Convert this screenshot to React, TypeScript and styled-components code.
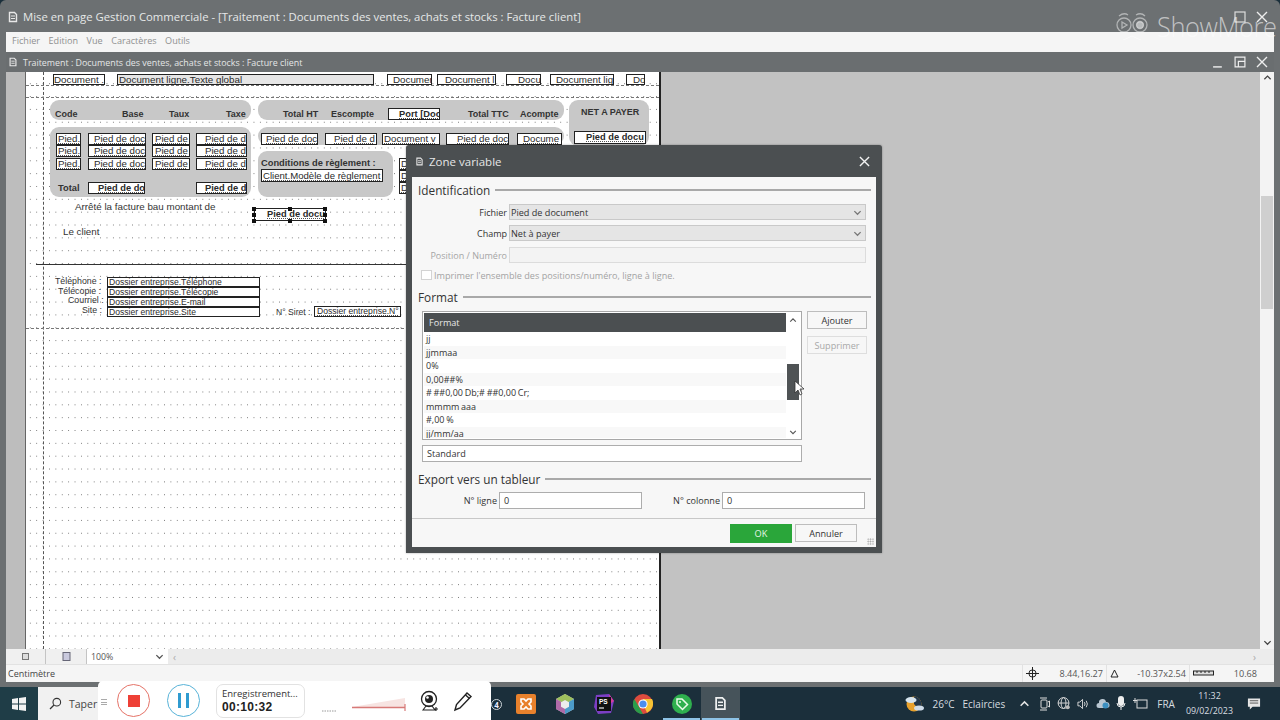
import React from "react";
import styled, { createGlobalStyle } from "styled-components";

const Global = createGlobalStyle`
  html, body { margin: 0; padding: 0; width: 1280px; height: 720px; overflow: hidden; background: #1b2f3b; }
  #root { width: 1280px; height: 720px; }
  * { box-sizing: border-box; }
`;

const Screen = styled.div`
  position: relative; width: 1280px; height: 720px; display: flex; flex-direction: column;
  font-family: "Open Sans", "Noto Sans", sans-serif; overflow: hidden;
`;
const Win = styled.div`
  height: 687px; background: #6c7072; padding: 0 6px 5px 6px; display: flex; flex-direction: column;
  border-radius: 6px 6px 0 0;
`;
const TitleBar = styled.div`
  height: 32px; display: flex; align-items: center; gap: 4px; color: #e6e8e8; font-size: 11.3px; padding: 1px 0 0 1px; flex: none;
`;
const TitleText = styled.span` flex: 1; white-space: nowrap; `;
const WinBtns = styled.div` display: flex; align-items: center; gap: 10px; margin-right: 6px; `;
const MenuBar = styled.div`
  height: 20px; background: #f5f5f5; display: flex; align-items: center; gap: 8.5px; padding: 0 0 3px 6px; flex: none;
  font-size: 9.1px; color: #8f9090;
`;
const ChildBar = styled.div`
  height: 20px; background: #6a6e70; display: flex; align-items: center; gap: 5px; padding-left: 2px; color: #e4e6e6; font-size: 8.9px; flex: none;
`;
const ChildText = styled.span` flex: 1; `;
const Work = styled.div` flex: 1; display: flex; min-height: 0; background: #c2c2c2; `;
const Gutter = styled.div` width: 19px; background: #bdbdbd; flex: none; `;
const Page = styled.div`
  position: relative; width: 636px; flex: none; background-color: #fff; overflow: hidden;
  border-left: 1px solid #666; border-right: 2px solid #222;
  background-image: radial-gradient(circle at center, #777 0.55px, transparent 0.85px);
  background-size: 6.4px 12.85px; background-position: 1.1px 5.3px;
`;
const Rest = styled.div` flex: 1; background: #c2c2c2; `;
const VScroll = styled.div`
  width: 14px; flex: none; background: #f3f3f3; display: flex; flex-direction: column; align-items: center; justify-content: space-between; padding: 1px 0 2px; position: relative;
`;
const VThumb = styled.div` position: absolute; left: 1px; top: 124px; width: 12px; height: 113px; background: #cfcfcf; `;
const TabRow = styled.div`
  height: 15px; background: #f2f2f2; display: flex; align-items: center; flex: none;
`;
const SheetTab = styled.div<{ $w: number }>`
  width: ${p => p.$w}px; height: 15px; background: #f0f0f0; border-right: 1px solid #c4c4c4; display: flex; align-items: center; justify-content: center; flex: none;
`;
const ZoomBox = styled.div`
  width: 81px; height: 15px; background: #fff; font-size: 8.8px; color: #555; padding: 0 4px 0 4px; display: flex; align-items: center; justify-content: space-between; flex: none;
`;
const HScroll = styled.div`
  flex: 1; height: 15px; background: #ececec; display: flex; align-items: center; justify-content: space-between; padding: 0 18px 0 5px; color: #aaa; font-size: 10px;
`;
const Status = styled.div`
  height: 18px; background: #f5f5f5; border-top: 1px solid #e2e2e2; display: flex; align-items: center; font-size: 9px; color: #444; padding-left: 2px; flex: none;
`;
const StatusLabel = styled.span` flex: 1; `;
const StatusCell = styled.div<{ $w: number }>`
  width: ${p => p.$w}px; height: 17px; border-left: 1px solid #e2e2e2; display: flex; align-items: center; justify-content: space-between; padding: 0 3px; font-size: 9.1px; color: #555; flex: none;
`;
const StatusValue = styled.span<{ $mr?: number }>` margin-right: ${p => p.$mr ?? 0}px; `;

/* free canvas: report designer */
const Field = styled.div<{ $x: number; $y: number; $w: number; $h?: number; $b?: boolean; $s?: number; $pad?: number; $bg?: string }>`
  position: absolute; left: ${p => p.$x}px; top: ${p => p.$y}px; width: ${p => p.$w}px; height: ${p => p.$h ?? 12}px;
  border: 1px solid #222; background: ${p => p.$bg ?? "#fff"}; font-family: "Liberation Sans", Arial, sans-serif;
  font-size: ${p => p.$s ?? (p.$b ? 9.3 : 9.7)}px; font-weight: ${p => (p.$b ? 700 : 400)}; color: #2a2a2a; line-height: ${p => (p.$h ?? 12) - 2}px;
  padding-left: ${p => p.$pad ?? 1}px; white-space: nowrap; overflow: hidden; text-decoration: underline dotted #555;
`;
const Label = styled.div<{ $x: number; $y: number; $b?: boolean; $s?: number }>`
  position: absolute; left: ${p => p.$x}px; top: ${p => p.$y}px; font-family: "Liberation Sans", Arial, sans-serif;
  font-size: ${p => p.$s ?? 9}px; font-weight: ${p => (p.$b ? 700 : 400)}; color: #333; white-space: nowrap; line-height: 12px;
`;
const Band = styled.div<{ $x: number; $y: number; $w: number; $h: number; $r?: number }>`
  position: absolute; left: ${p => p.$x}px; top: ${p => p.$y}px; width: ${p => p.$w}px; height: ${p => p.$h}px;
  background: #c8c8c8; border-radius: ${p => p.$r ?? 9}px;
`;
const HDots = styled.div<{ $y: number }>`
  position: absolute; left: 0; right: 0; top: ${p => p.$y}px; border-top: 1px dashed #777;
`;
const HLine = styled.div<{ $x: number; $y: number }>`
  position: absolute; left: ${p => p.$x}px; right: 0; top: ${p => p.$y}px; border-top: 1px solid #333;
`;
const VDots = styled.div`
  position: absolute; left: 17px; top: 0; bottom: 0; border-left: 1px dashed #555;
`;
const Handle = styled.div<{ $x: number; $y: number }>`
  position: absolute; left: ${p => p.$x}px; top: ${p => p.$y}px; width: 4px; height: 4px; background: #111;
`;

/* dialog */
const Dialog = styled.div`
  position: absolute; left: 406px; top: 145px; width: 476px; height: 408px; background: #4b4f51; border-radius: 3px 3px 0 0;
  padding: 0 6px 6px; display: flex; flex-direction: column; box-shadow: 0 0 2px rgba(0,0,0,.4);
`;
const DlgTitle = styled.div`
  height: 32px; display: flex; align-items: center; gap: 5px; color: #e5e6e6; font-size: 11.5px; padding: 0 6px 0 3px; flex: none;
`;
const DlgBody = styled.div`
  flex: 1; background: #f7f7f7; display: flex; flex-direction: column; min-height: 0; position: relative;
`;
const DlgMain = styled.div` flex: 1; padding: 4px 5px 0 6px; `;
const GroupHead = styled.div<{ $mt?: number }>`
  display: flex; align-items: center; gap: 5px; font-size: 11.8px; color: #333; height: 18px; margin-top: ${p => p.$mt ?? 0}px;
  &::after { content: ""; flex: 1; height: 2px; background: #a9a9a9; }
`;
const FormRow = styled.div<{ $mt?: number }>`
  display: flex; align-items: center; height: 16px; gap: 2px; margin-top: ${p => p.$mt ?? 0}px;
`;
const RowLabel = styled.span<{ $off?: boolean }>`
  width: 89px; text-align: right; font-size: 9px; color: ${p => (p.$off ? "#a5a5a5" : "#333")}; flex: none; white-space: nowrap;
`;
const Combo = styled.div`
  width: 357px; height: 16px; background: #e5e5e5; border: 1px solid #c9c9c9; font-size: 9.1px; color: #333; display: flex; align-items: center; justify-content: space-between; padding: 0 3px 0 1px; flex: none;
`;
const DisabledInput = styled.div` width: 357px; height: 16px; background: #f3f3f3; border: 1px solid #dcdcdc; flex: none; `;
const CheckRow = styled.div`
  display: flex; align-items: center; gap: 2px; height: 14px; margin: 5px 0 0 3px; color: #a3a3a3; font-size: 9.1px; white-space: nowrap;
`;
const CheckBox = styled.div` width: 11px; height: 10px; background: #fff; border: 1px solid #d3d3d3; flex: none; `;
const FormatArea = styled.div` display: flex; gap: 5px; margin: 5px 0 0 4px; `;
const FormatCol = styled.div` width: 380px; display: flex; flex-direction: column; gap: 5px; flex: none; `;
const ListBox = styled.div`
  height: 129px; border: 1px solid #a8a8a8; background: #fff; display: flex; position: relative; padding: 1px;
`;
const ListMain = styled.div` flex: 1; display: flex; flex-direction: column; overflow: hidden; `;
const ListHead = styled.div`
  height: 19px; background: #4b4f51; color: #e8e8e8; font-size: 9.1px; display: flex; align-items: center; padding-left: 5px; flex: none;
`;
const ListItem = styled.div<{ $alt?: boolean }>`
  height: 13.5px; flex: none; font-size: 9px; color: #333; padding-left: 2px; display: flex; align-items: center; background: ${p => (p.$alt ? "#f8f8f8" : "#fff")}; white-space: nowrap; word-spacing: -0.6px;
`;
const ListScroll = styled.div`
  width: 14px; flex: none; position: relative; display: flex; flex-direction: column; justify-content: space-between; align-items: center; padding: 3px 0 2px;
`;
const ListThumb = styled.div` position: absolute; left: 1px; top: 51px; width: 12px; height: 36px; background: #4f5355; `;
const TextInput = styled.div<{ $w?: number }>`
  height: 17px; background: #fff; border: 1px solid #adadad; font-size: 9.1px; color: #333; display: flex; align-items: center; padding-left: 4px;
  ${p => (p.$w ? `width: ${p.$w}px; flex: none;` : "")}
`;
const SideBtns = styled.div` display: flex; flex-direction: column; gap: 7px; `;
const Btn = styled.div<{ $off?: boolean; $w?: number }>`
  width: ${p => p.$w ?? 60}px; height: 18px; background: #f7f7f7; border: 1px solid ${p => (p.$off ? "#dedede" : "#bdbdbd")};
  font-size: 9.1px; color: ${p => (p.$off ? "#a8a8a8" : "#333")}; display: flex; align-items: center; justify-content: center; flex: none;
`;
const ExportRow = styled.div` display: flex; align-items: center; margin: 4px 0 0 0; height: 17px; `;
const ExportLabel = styled.span<{ $w: number }>`
  width: ${p => p.$w}px; text-align: right; font-size: 9.1px; color: #333; flex: none; margin-right: 2px; white-space: nowrap;
`;
const DlgFoot = styled.div`
  height: 29px; flex: none; border-top: 1px solid #c8c8c8; display: flex; align-items: center; justify-content: flex-end; gap: 3px; padding-right: 19px; background: #f7f7f7; position: relative;
`;
const OkBtn = styled.div`
  width: 62px; height: 19px; background: #2aa63a; color: #e6f5e8; font-size: 9.2px; display: flex; align-items: center; justify-content: center;
`;
const Grip = styled.div`
  position: absolute; right: 2px; bottom: 2px; width: 7px; height: 7px;
  background-image: radial-gradient(circle, #a5a5a5 0.7px, transparent 0.9px); background-size: 2.4px 2.4px;
`;

/* taskbar + recorder */
const Taskbar = styled.div`
  flex: 1; background: #1b2f3b; display: flex; align-items: center; color: #dfe4e6; position: relative;
`;
const StartBtn = styled.div` width: 38px; height: 33px; background: #1f3d47; display: flex; align-items: center; justify-content: center; flex: none; `;
const SearchBox = styled.div`
  width: 130px; height: 33px; background: #f1f1f1; display: flex; align-items: center; gap: 7px; padding-left: 11px; font-size: 10.5px; color: #444; flex: none;
`;
const Badge = styled.div`
  position: absolute; left: 491px; top: 12px; width: 11px; height: 11px; border-radius: 50%; border: 1px solid #cfd6da; background: #1b2f3b;
  color: #eef; font-size: 8px; font-weight: 700; line-height: 9px; text-align: center;
`;
const TaskIcons = styled.div` position: absolute; left: 506px; top: 0; height: 33px; display: flex; align-items: center; `;
const TaskIcon = styled.div<{ $active?: boolean; $under?: boolean }>`
  width: 39px; height: 33px; display: flex; align-items: center; justify-content: center; position: relative;
  background: ${p => (p.$active ? "#46535a" : "transparent")};
  &::after { content: ""; display: ${p => (p.$under ? "block" : "none")}; position: absolute; left: 1px; right: 1px; bottom: 0; height: 2px; background: #8ec3e6; }
`;
const Tray = styled.div`
  margin-left: auto; display: flex; align-items: center; height: 33px; font-size: 10px; color: #d8dde0; padding-right: 19px;
`;
const TrayText = styled.span<{ $ml?: number }>` margin-left: ${p => p.$ml ?? 0}px; white-space: nowrap; display: flex; align-items: center; `;
const Clock = styled.div`
  margin-left: 11px; display: flex; flex-direction: column; align-items: center; font-size: 8.9px; line-height: 14.5px;
`;
const Recorder = styled.div`
  position: absolute; left: 98px; top: 681px; width: 393px; height: 39px; background: #fff; border-radius: 5px 5px 0 0; display: flex; align-items: center; padding-left: 19px;
`;
const Grab = styled.div`
  position: absolute; left: 3px; top: 18px; width: 6px; height: 6px; border-top: 1px solid #aaa; border-bottom: 1px solid #aaa;
  &::after { content: ""; display: block; margin-top: 2px; border-top: 1px solid #aaa; }
`;
const RoundBtn = styled.div<{ $c: string; $ml?: number }>`
  width: 33px; height: 33px; border-radius: 50%; border: 1px solid ${p => p.$c}; display: flex; align-items: center; justify-content: center; flex: none; margin-left: ${p => p.$ml ?? 0}px;
`;
const StopSq = styled.div` width: 12px; height: 12px; background: #ee4036; `;
const PauseBars = styled.div`
  display: flex; gap: 5px;
  &::before, &::after { content: ""; width: 3px; height: 15px; background: #2f9bd0; }
`;
const TimerBox = styled.div`
  width: 89px; height: 34px; margin-left: 16px; border: 1px solid #e2e2e2; border-radius: 7px; padding: 3px 0 0 5px; display: flex; flex-direction: column; flex: none;
`;
const TimerTop = styled.span` font-size: 9.5px; color: #333; line-height: 12px; white-space: nowrap; `;
const TimerVal = styled.span` font-family: "Liberation Sans", Arial, sans-serif; font-size: 12px; font-weight: 700; color: #222; line-height: 15px; letter-spacing: .3px; `;
const Meter = styled.svg` margin-left: 16px; flex: none; `;
const WebcamIcon = styled.svg` margin-left: 2px; flex: none; `;
const PencilIcon = styled.svg` margin-left: 12px; flex: none; `;
const Cursor = styled.svg` position: absolute; left: 794px; top: 380px; `;
const Watermark = styled.div`
  position: absolute; left: 1115px; top: 10px; display: flex; align-items: center; gap: 8px; pointer-events: none; opacity: .95;
`;
const WmText = styled.span`
  font-family: "Open Sans", sans-serif; font-size: 27px; font-weight: 300; color: rgba(255,255,255,.62); letter-spacing: -0.4px; line-height: 34px; transform: scaleX(.94); transform-origin: left;
`;

const Chev = ({ c = "#666", up = false, s = 9 }: { c?: string; up?: boolean; s?: number }) => (
  <svg width={s} height={s} viewBox="0 0 10 10"><path d={up ? "M1.5 7 5 3.5 8.5 7" : "M1.5 3.5 5 7l3.5-3.5"} fill="none" stroke={c} strokeWidth="1.4" /></svg>
);
const DocIcon = ({ s = 11, c = "#e8e8e8" }: { s?: number; c?: string }) => (
  <svg width={s} height={s} viewBox="0 0 12 12"><path d="M2.5 1.5h5l2 2v7h-7z" fill="none" stroke={c} strokeWidth="1.4" /><path d="M4 5h4M4 7.500h4" stroke={c} strokeWidth="1.100" /></svg>
);
const Cross = ({ s = 11, c = "#eee", w = 1.4 }: { s?: number; c?: string; w?: number }) => (
  <svg width={s} height={s} viewBox="0 0 12 12"><path d="M1 1l10 10M11 1 1 11" stroke={c} strokeWidth={w} /></svg>
);

const fields: [number, number, number, string, boolean?, number?][] = [
  [30, 61, 25, "Pied.", false, 1], [62, 61, 58, " Pied de doc", false, 5], [126, 61, 38, "Pied de", false, 2], [170, 61, 51, " Pied de d", false, 8],
  [30, 73, 25, "Pied.", false, 1], [62, 73, 58, " Pied de doc", false, 5], [126, 73, 38, "Pied de", false, 2], [170, 73, 51, " Pied de d", false, 8],
  [30, 86, 25, "Pied.", false, 1], [62, 86, 58, " Pied de doc", false, 5], [126, 86, 38, "Pied de", false, 2], [170, 86, 51, " Pied de d", false, 8],
  [62, 110, 57, " Pied de do", true, 9], [170, 110, 51, " Pied de d", true, 8],
  [235, 61, 57, " Pied de doc", false, 4], [299, 61, 52, " Pied de d", false, 8], [356, 61, 58, "Document v", false, 1], [420, 61, 63, " Pied de doc", false, 10], [491, 61, 45, " Docume", false, 5],
  [373, 86, 8, "D"], [373, 98, 8, "D"], [373, 110, 8, "D"],
];

const lines = ["jj", "jjmmaa", "0%", "0,00##%", "# ##0,00 Db;# ##0,00 Cr;", "mmmm aaa", "#,00 %", "jj/mm/aa"];
const contacts = [["Téléphone :", 29], ["Télécopie :", 32], ["Courriel :", 42], ["Site :", 56]] as const;
const contactFields = ["Dossier entreprise.Téléphone", "Dossier entreprise.Télécopie", "Dossier entreprise.E-mail", "Dossier entreprise.Site"];

export default function App() {
  return (
    <Screen>
      <Global />
      <Win>
        <TitleBar>
          <DocIcon s={12} />
          <TitleText>Mise en page Gestion Commerciale - [Traitement : Documents des ventes, achats et stocks : Facture client]</TitleText>
          <WinBtns>
            <svg width="12" height="12" viewBox="0 0 12 12"><rect x="1" y="1" width="10" height="10" fill="none" stroke="#ddd" strokeWidth="1.2" /></svg>
            <Cross s={12} />
          </WinBtns>
        </TitleBar>
        <MenuBar>
          <span>Fichier</span><span>Edition</span><span>Vue</span><span>Caractères</span><span>Outils</span>
        </MenuBar>
        <ChildBar>
          <DocIcon s={10} />
          <ChildText>Traitement : Documents des ventes, achats et stocks : Facture client</ChildText>
          <WinBtns>
            <svg width="12" height="12" viewBox="0 0 11 11"><path d="M1 10h8" stroke="#eee" strokeWidth="1.3" /></svg>
            <svg width="12" height="12" viewBox="0 0 11 11"><path d="M1 1h9v9H1zM4 10V5h6" fill="none" stroke="#eee" strokeWidth="1.1" /></svg>
            <Cross s={12} />
          </WinBtns>
        </ChildBar>
        <Work>
          <Gutter />
          <Page>
            <VDots />
            <HDots $y={13} />
            <HDots $y={25} />
            <Field $x={27} $y={2} $w={52} $h={11} $s={9.8} $pad={0}>Document .</Field>
            <Field $x={91} $y={2} $w={257} $h={11} $s={9.8} $pad={1} $bg="#e6e6e6">Document ligne.Texte global</Field>
            <Field $x={361} $y={2} $w={45} $h={11} $s={9.8} $pad={5}>Document</Field>
            <Field $x={411} $y={2} $w={59} $h={11} $s={9.8} $pad={7}>Document l</Field>
            <Field $x={480} $y={2} $w={35} $h={11} $s={9.8} $pad={11}>Docu</Field>
            <Field $x={524} $y={2} $w={64} $h={11} $s={9.8} $pad={5}>Document lig</Field>
            <Field $x={600} $y={2} $w={19} $h={11} $s={9.8} $pad={6}>Do</Field>

            <Band $x={24} $y={28} $w={201} $h={20} />
            <Band $x={232} $y={28} $w={306} $h={20} />
            <Band $x={24} $y={55} $w={201} $h={70} />
            <Band $x={232} $y={55} $w={306} $h={18} />
            <Band $x={232} $y={79} $w={135} $h={46} />
            <Band $x={543} $y={28} $w={80} $h={46} />

            <Label $b $x={29} $y={36}>Code</Label>
            <Label $b $x={96} $y={36}>Base</Label>
            <Label $b $x={143} $y={36}>Taux</Label>
            <Label $b $x={200} $y={36}>Taxe</Label>
            <Label $b $x={257} $y={36}>Total HT</Label>
            <Label $b $x={305} $y={36}>Escompte</Label>
            <Field $b $x={362} $y={36} $w={52} $pad={10}>Port [Doc</Field>
            <Label $b $x={442} $y={36}>Total TTC</Label>
            <Label $b $x={494} $y={36}>Acompte</Label>
            <Label $b $x={555} $y={34} $s={9}>NET A PAYER</Label>
            <Field $b $x={548} $y={59} $w={72} $h={13} $pad={11}>Pied de docu</Field>
            {fields.map(([x, y, w, t, b, pad], i) => (
              <Field key={i} $x={x} $y={y} $w={w} $b={b} $pad={pad}>{t}</Field>
            ))}
            <Label $b $x={32} $y={110} $s={9.3}>Total</Label>
            <Label $b $x={235} $y={85} $s={9.3}>Conditions de règlement :</Label>
            <Field $x={235} $y={97} $w={122} $h={13} $s={9.6}>Client.Modèle de règlement</Field>

            <Label $x={49} $y={129} $s={9.8}>Arrêté la facture bau montant de</Label>
            <Field $b $x={228} $y={136} $w={72} $pad={12} $h={13}>Pied de docu</Field>
            <Handle $x={226} $y={135} /><Handle $x={262} $y={135} /><Handle $x={297} $y={135} />
            <Handle $x={226} $y={141} /><Handle $x={297} $y={141} />
            <Handle $x={226} $y={147} /><Handle $x={262} $y={147} /><Handle $x={297} $y={147} />
            <Label $x={37} $y={154} $s={9.8}>Le client</Label>

            <HLine $x={10} $y={192} />
            {contacts.map(([t, x], i) => (
              <Label key={t} $x={x} $y={203 + i * 9.7} $s={8.8}>{t}</Label>
            ))}
            {contactFields.map((t, i) => (
              <Field key={t} $x={81} $y={205 + i * 10} $w={153} $h={10} $s={8.6}>{t}</Field>
            ))}
            <Label $x={250} $y={234} $s={8.6}>N° Siret :</Label>
            <Field $x={288} $y={234} $w={87} $h={11} $s={8.6} $pad={2}>Dossier entreprise.N°</Field>
            <HDots $y={256} />
          </Page>
          <Rest />
          <VScroll>
            <Chev c="#444" up />
            <VThumb />
            <Chev c="#444" />
          </VScroll>
        </Work>
        <TabRow>
          <SheetTab $w={40}><svg width="7" height="7" viewBox="0 0 7 7"><rect x=".5" y=".5" width="6" height="6" fill="#ddd" stroke="#777" /></svg></SheetTab>
          <SheetTab $w={41}><svg width="9" height="9" viewBox="0 0 9 9"><rect x="1" y=".5" width="7" height="8" fill="#c9c9dd" stroke="#667" /></svg></SheetTab>
          <ZoomBox>100%<Chev c="#555" /></ZoomBox>
          <HScroll><span>‹</span><span>›</span></HScroll>
        </TabRow>
        <Status>
          <StatusLabel>Centimètre</StatusLabel>
          <StatusCell $w={84}>
            <svg width="13" height="13" viewBox="0 0 13 13"><circle cx="6.5" cy="6.5" r="3.6" fill="none" stroke="#222" strokeWidth="1" /><path d="M6.5 0v13M0 6.5h13" stroke="#222" strokeWidth="1" /></svg>
            <StatusValue>8.44,16.27</StatusValue>
          </StatusCell>
          <StatusCell $w={83}>
            <svg width="9" height="9" viewBox="0 0 9 9"><path d="M4.5 1 8 8H1z" fill="none" stroke="#222" strokeWidth="1" /></svg>
            <StatusValue>-10.37x2.54</StatusValue>
          </StatusCell>
          <StatusCell $w={85}>
            <svg width="21" height="7" viewBox="0 0 21 7"><rect x=".5" y="1" width="20" height="4" fill="#ddd" stroke="#222" /><path d="M4 1v2M8 1v2M12 1v2M16 1v2" stroke="#222" /></svg>
            <StatusValue $mr={14}>10.68</StatusValue>
          </StatusCell>
        </Status>
      </Win>
      <Taskbar>
        <StartBtn>
          <svg width="14" height="14" viewBox="0 0 14 14" fill="#f2f2f2"><path d="M0 2l6-1v5.500H0zM7 .9 14 0v6.500H7zM0 7.500h6V13l-6-1zM7 7.500h7V14l-7-1z" /></svg>
        </StartBtn>
        <SearchBox>
          <svg width="13" height="13" viewBox="0 0 13 13"><circle cx="7.800" cy="5.200" r="3.800" fill="none" stroke="#333" strokeWidth="1.100" /><path d="M5 8 1 12" stroke="#333" strokeWidth="1.200" /></svg>
          Taper
        </SearchBox>
        <Badge>4</Badge>
        <TaskIcons>
          <TaskIcon>
            <svg width="20" height="20" viewBox="0 0 20 20"><rect width="20" height="20" rx="2" fill="#e8812c" /><path d="M5 5h3l2 2 2-2h3v3l-2 2 2 2v3h-3l-2-2-2 2H5v-3l2-2-2-2z" fill="none" stroke="#fff" strokeWidth="1.600" /></svg>
          </TaskIcon>
          <TaskIcon>
            <svg width="18" height="20" viewBox="0 0 18 20"><path d="M9 0l9 5v10l-9 5-9-5V5z" fill="#c9c9c9" /><path d="M9 0l9 5-9 5-9-5z" fill="#9dbf5c" /><path d="M0 5l9 5v10l-9-5z" fill="#b06aa8" /><path d="M18 5l-9 5v10l9-5z" fill="#4c9bc9" /><path d="M9 6l4 2.300v4.500L9 15l-4-2.200V8.300z" fill="#ececec" /></svg>
          </TaskIcon>
          <TaskIcon>
            <svg width="20" height="20" viewBox="0 0 20 20"><path d="M2 1l13-1 5 7-3 12-13 1-4-7z" fill="#7b3fc4" /><path d="M15 0l5 7-4 3z" fill="#d63ca0" /><rect x="3" y="3" width="14" height="14" fill="#111" /><text x="5" y="10" fontSize="6.500" fontWeight="700" fill="#fff" fontFamily="Liberation Sans">PS</text><path d="M5 14h5" stroke="#fff" strokeWidth="1.100" /></svg>
          </TaskIcon>
          <TaskIcon>
            <svg width="20" height="20" viewBox="0 0 20 20"><circle cx="10" cy="10" r="10" fill="#dd4b3e" /><path d="M10 5h9a10 10 0 0 1-5 13.700L10 10z" fill="#f6c334" /><path d="M1.300 5 6 13l4 7A10 10 0 0 1 1.300 5z" fill="#2a9d4a" /><circle cx="10" cy="10" r="4.600" fill="#fff" /><circle cx="10" cy="10" r="3.600" fill="#4a8df0" /></svg>
          </TaskIcon>
          <TaskIcon $under>
            <svg width="20" height="20" viewBox="0 0 20 20"><circle cx="10" cy="10" r="10" fill="#2fb04e" /><path d="M5 5h5l5.500 5.500-5 5L5 10z" fill="none" stroke="#eafbe9" strokeWidth="1.500" /><circle cx="8" cy="8" r="1" fill="#eafbe9" /></svg>
          </TaskIcon>
          <TaskIcon $active $under>
            <DocIcon s={15} c="#eef0f0" />
          </TaskIcon>
        </TaskIcons>
        <Tray>
          <svg width="20" height="18" viewBox="0 0 20 18"><circle cx="9" cy="9" r="7.500" fill="#e8a12c" /><path d="M9 1.500a7.500 7.500 0 0 1 5 13L9 9z" fill="#24384a" /><ellipse cx="6" cy="5" rx="5.500" ry="3" fill="#d6e4ee" /><ellipse cx="14" cy="13" rx="5" ry="2.600" fill="#cfdce8" /></svg>
          <TrayText $ml={7}>26°C</TrayText>
          <TrayText $ml={8}>Eclaircies</TrayText>
          <TrayText $ml={14}><Chev c="#e4e4e4" up s={11} /></TrayText>
          <TrayText $ml={9}>
            <svg width="11" height="14" viewBox="0 0 11 14"><rect x="2" y="3" width="6" height="8" rx="1" fill="none" stroke="#ddd" /><path d="M1 1h7M1 13h7M9 5l1.500-1v6L9 9" stroke="#ddd" fill="none" /></svg>
          </TrayText>
          <TrayText $ml={7}>
            <svg width="14" height="15" viewBox="0 0 15 15"><circle cx="7" cy="7" r="5.800" fill="none" stroke="#ddd" /><ellipse cx="7" cy="7" rx="2.600" ry="5.800" fill="none" stroke="#ddd" /><path d="M1 7h12" stroke="#ddd" /><circle cx="11.500" cy="11.500" r="2.200" fill="#bbb" /></svg>
          </TrayText>
          <TrayText $ml={6}>
            <svg width="12" height="14" viewBox="0 0 13 14"><path d="M1 5h2l3-3v10L3 9H1z" fill="none" stroke="#ddd" /><path d="M8 5q1.500 2 0 4M10 3.500q2.500 3.500 0 7" fill="none" stroke="#ddd" /></svg>
          </TrayText>
          <TrayText $ml={7}>
            <svg width="14" height="11" viewBox="0 0 14 11"><path d="M3 10a2.500 2.500 0 0 1 0-5 3.500 3.500 0 0 1 7-1 3 3 0 0 1 1 6z" fill="#b9c6d1" /><circle cx="9.500" cy="7.500" r="3" fill="#3c8fc0" /></svg>
          </TrayText>
          <TrayText $ml={6}>
            <svg width="10" height="15" viewBox="0 0 10 15"><rect x="2" y="0" width="6" height="10" rx="3" fill="#eee" /><path d="M1 7a4 4 0 0 0 8 0M5 11v3" fill="none" stroke="#eee" /></svg>
          </TrayText>
          <TrayText $ml={7}>
            <svg width="15" height="11" viewBox="0 0 15 11"><rect x="4" y="2" width="10" height="8" fill="none" stroke="#ddd" /><path d="M2 0v5M0 2.500h4" stroke="#ddd" /></svg>
          </TrayText>
          <TrayText $ml={9}>FRA</TrayText>
          <Clock><span>11:32</span><span>09/02/2023</span></Clock>
          <TrayText $ml={14}>
            <svg width="14" height="14" viewBox="0 0 15 14"><path d="M1 1h13v9H6l-3 3v-3H1z" fill="#e6e6e6" /><path d="M3 3.500h9M3 6h9" stroke="#555" /></svg>
          </TrayText>
        </Tray>
      </Taskbar>

      <Watermark>
        <svg width="34" height="32" viewBox="0 0 34 32" fill="none" stroke="rgba(255,255,255,.5)" strokeWidth="1.300">
          <circle cx="9" cy="14" r="7" /><path d="M7 11l5 3-5 3z" />
          <circle cx="25" cy="14" r="7" /><circle cx="25" cy="14" r="3.500" fill="rgba(255,255,255,.55)" />
          <path d="M4 5q5-4 9-1M21 4q5-3 9 1M8 29q5-2 9-4 4 2 9 4" />
        </svg>
        <WmText>ShowMore</WmText>
      </Watermark>

      <Dialog>
        <DlgTitle>
          <DocIcon s={9} />
          <TitleText>Zone variable</TitleText>
          <Cross s={11} c="#f2f2f2" w={1.500} />
        </DlgTitle>
        <DlgBody>
          <DlgMain>
            <GroupHead>Identification</GroupHead>
            <FormRow $mt={5}><RowLabel>Fichier</RowLabel><Combo>Pied de document<Chev c="#777" /></Combo></FormRow>
            <FormRow $mt={5}><RowLabel>Champ</RowLabel><Combo>Net à payer<Chev c="#777" /></Combo></FormRow>
            <FormRow $mt={6}><RowLabel $off>Position / Numéro</RowLabel><DisabledInput /></FormRow>
            <CheckRow><CheckBox />Imprimer l'ensemble des positions/numéro, ligne à ligne.</CheckRow>
            <GroupHead $mt={6}>Format</GroupHead>
            <FormatArea>
              <FormatCol>
                <ListBox>
                  <ListMain>
                    <ListHead>Format</ListHead>
                    {lines.map((t, i) => <ListItem key={t} $alt={i % 2 === 1}>{t}</ListItem>)}
                  </ListMain>
                  <ListScroll>
                    <Chev c="#555" up s={8} />
                    <ListThumb />
                    <Chev c="#555" s={8} />
                  </ListScroll>
                </ListBox>
                <TextInput>Standard</TextInput>
              </FormatCol>
              <SideBtns>
                <Btn>Ajouter</Btn>
                <Btn $off>Supprimer</Btn>
              </SideBtns>
            </FormatArea>
            <GroupHead $mt={8}>Export vers un tableur</GroupHead>
            <ExportRow>
              <ExportLabel $w={79}>N° ligne</ExportLabel>
              <TextInput $w={143}>0</TextInput>
              <ExportLabel $w={78}>N° colonne</ExportLabel>
              <TextInput $w={143}>0</TextInput>
            </ExportRow>
          </DlgMain>
          <DlgFoot>
            <OkBtn>OK</OkBtn>
            <Btn $w={62}>Annuler</Btn>
            <Grip />
          </DlgFoot>
        </DlgBody>
      </Dialog>

      <Recorder>
        <Grab />
        <RoundBtn $c="#e57368"><StopSq /></RoundBtn>
        <RoundBtn $c="#58b3d8" $ml={17}><PauseBars /></RoundBtn>
        <TimerBox>
          <TimerTop>Enregistrement...</TimerTop>
          <TimerVal>00:10:32</TimerVal>
        </TimerBox>
        <Meter width="96" height="24" viewBox="0 0 96 24">
          <path d="M1 22h15" stroke="#999" strokeWidth="1" strokeDasharray="1.500 1" />
          <path d="M31 18 84 9v9z" fill="#f7e4e2" />
          <path d="M31 18.500h53" stroke="#d77a78" strokeWidth="1.600" />
          <path d="M84 15v7" stroke="#d77a78" strokeWidth="1.200" />
        </Meter>
        <WebcamIcon width="22" height="22" viewBox="0 0 22 22">
          <circle cx="10" cy="9" r="7.500" fill="#fff" stroke="#222" strokeWidth="1.300" />
          <circle cx="10" cy="9" r="4" fill="#222" /><circle cx="8.500" cy="7.500" r="1.300" fill="#fff" />
          <path d="M4 20l3-4h6l3 4zM17 17v4M15 19h4" fill="none" stroke="#222" strokeWidth="1.100" />
        </WebcamIcon>
        <PencilIcon width="20" height="22" viewBox="0 0 20 22">
          <path d="M2 20l1.500-5.500L14 3l4 3.500L7 18z" fill="none" stroke="#222" strokeWidth="1.400" />
          <path d="M12.500 5l4 3.500" stroke="#222" strokeWidth="1.400" />
        </PencilIcon>
      </Recorder>
      <Cursor width="11" height="16" viewBox="0 0 11 16">
        <path d="M1 1v12l3-3 2 5 2-1-2-5h4z" fill="#fff" stroke="#333" strokeWidth=".8" />
      </Cursor>
    </Screen>
  );
}
